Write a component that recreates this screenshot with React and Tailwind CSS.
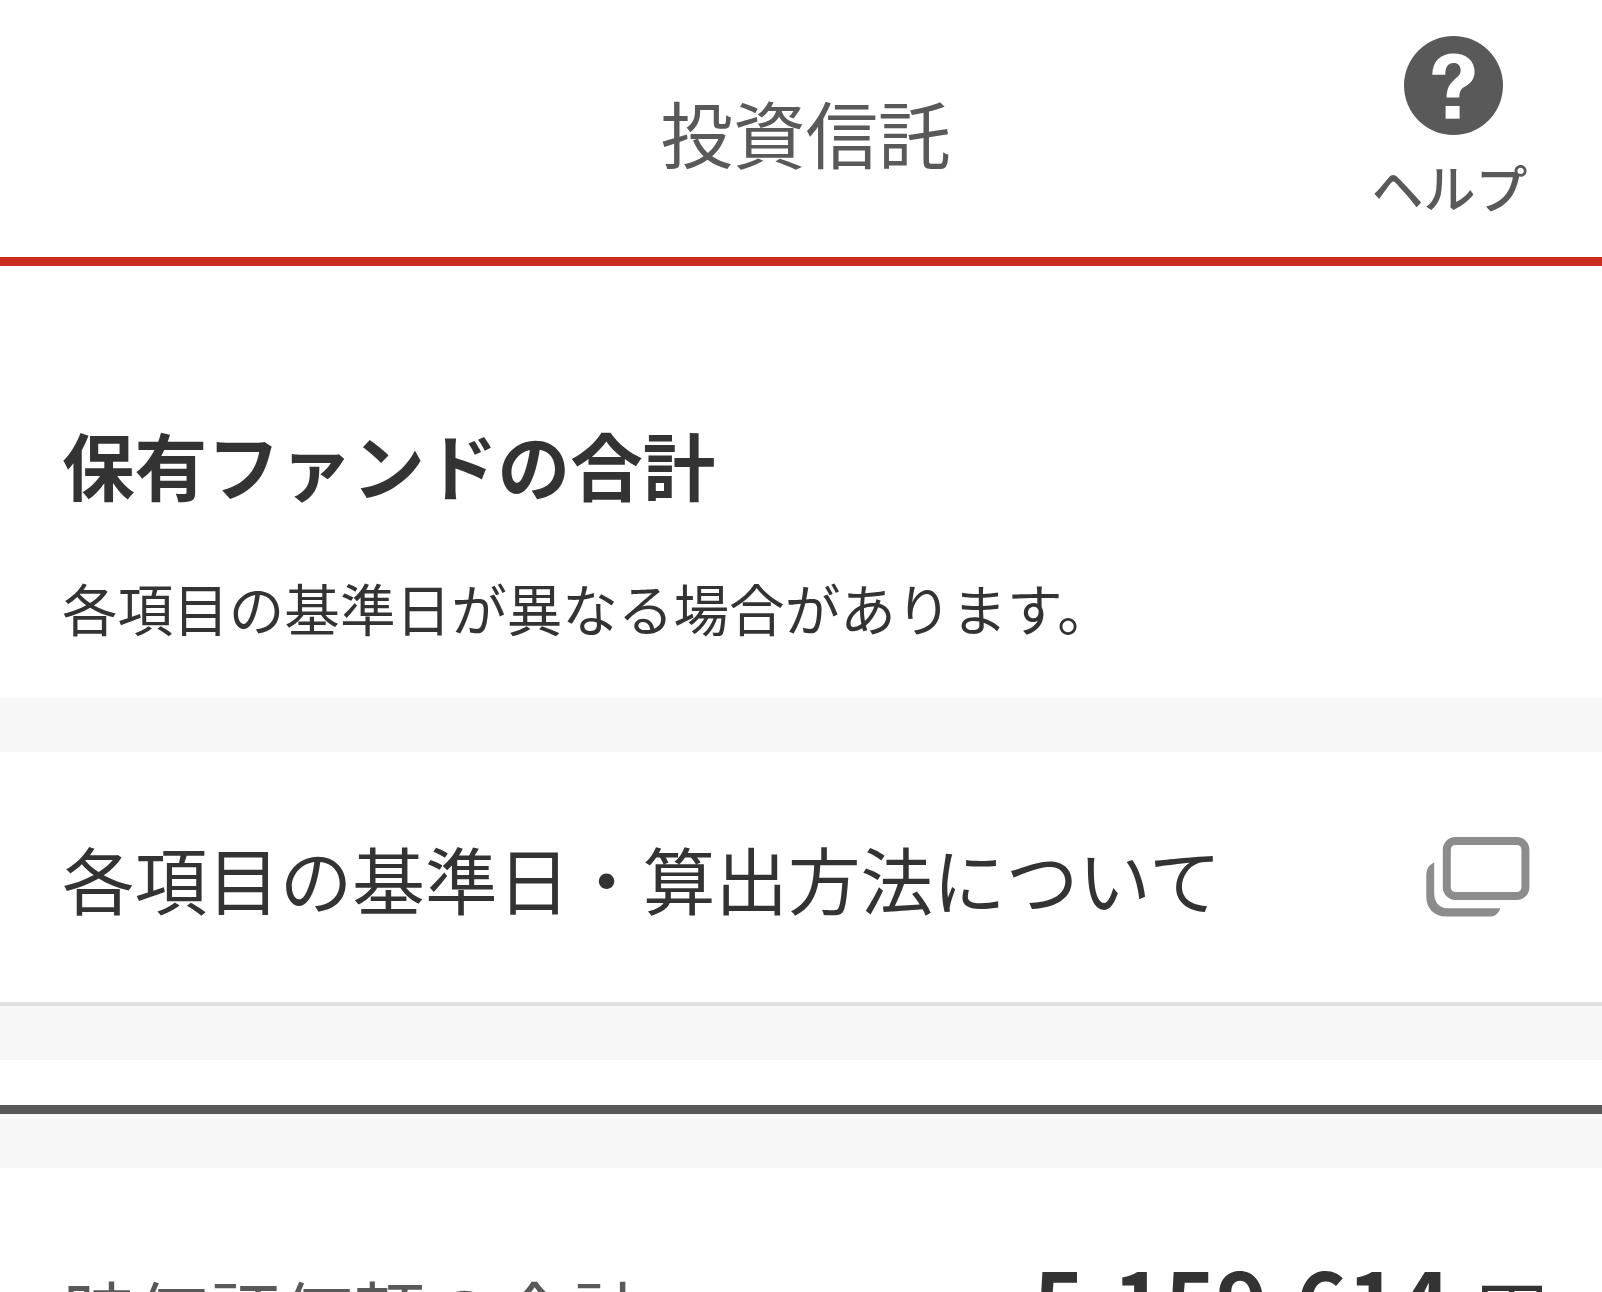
import React from "react";

const HelpIcon = () => (
  <svg className="h-[99px] w-[99px]" viewBox="0 0 99 99" fill="#fff">
    <circle cx="49.5" cy="49.5" r="49.5" fill="#595959" />
    <path d="M28.300 38.700C28.500 25 36.500 17.400 49.500 17.400C62 17.400 70.600 24.500 70.600 35.500C70.600 43.500 66 48.500 58.500 52C56 54.500 55.300 57 55.300 61.400H42.600C42.600 53.500 45 48.500 50.500 43.500C54.800 40 56.600 38 56.600 34.500C56.600 29.500 54 27 49.500 27C44 27 41.300 31 41.300 38.700Z" />
    <rect x="41.600" y="70" width="14" height="12.700" />
  </svg>
);

const WindowIcon = () => (
  <svg className="h-[80px] w-[104px]" viewBox="0 0 104 80" fill="#8c8c8c">
    <rect x="20.800" y="4" width="78.600" height="55" rx="8.500" fill="none" stroke="#8c8c8c" strokeWidth="8" />
    <path d="M8.200 25.500V56C8.200 65 13 71.200 21.500 71.200H74.300C73 75.500 69.500 79.600 64 79.600H20C8 79.600 0.300 71 0.300 60V38C0.300 31.500 4 27 8.200 25.500Z" />
  </svg>
);

const App = () => {
  return (
    <div className="h-[1292px] w-[1602px] overflow-hidden bg-white font-['Noto_Sans_CJK_JP',sans-serif] text-[#333] whitespace-nowrap">
      <header className="flex h-[266px] border-b-[9px] border-[#cb2e20] text-[#595959]">
        <div className="w-[307px]" />
        <h1 className="flex-1 pt-[79px] text-center text-[72.600px] leading-[106px]">投資信託</h1>
        <div className="flex w-[298px] flex-col items-center pt-[36px]">
          <HelpIcon />
          <span className="mt-[12px] mr-[7px] text-[52px] font-medium leading-[80px]">ヘルプ</span>
        </div>
      </header>

      <section className="h-[432px] px-[62px] pt-[145px]">
        <h2 className="text-[72.600px] font-bold leading-[106px]">保有ファンドの合計</h2>
        <p className="mt-[50px] text-[55.600px] leading-[80px]">各項目の基準日が異なる場合があります。</p>
      </section>

      <div className="h-[54px] bg-[#f7f7f7]" />

      <div className="flex h-[254px] items-center justify-between border-b-4 border-[#e1e1e1] pl-[62px] pr-[72px]">
        <span className="pt-[3px] text-[72.600px]">各項目の基準日・算出方法について</span>
        <WindowIcon />
      </div>

      <div className="h-[54px] bg-[#f7f7f7]" />
      <div className="h-[54px] border-b-[9px] border-[#595959]" />
      <div className="h-[54px] bg-[#f7f7f7]" />

      <div className="flex items-start pl-[63px] pr-[54px] pt-[76px]">
        <span className="flex-1 pt-[15px] text-[72.600px] leading-[106px] text-[#595959]">時価評価額の合計</span>
        <span className="text-[87.300px] font-bold leading-[106px]">5,159,614</span>
        <span className="ml-[25px] pt-[14px] text-[72.600px] leading-[106px]">円</span>
      </div>
    </div>
  );
};

export default App;
